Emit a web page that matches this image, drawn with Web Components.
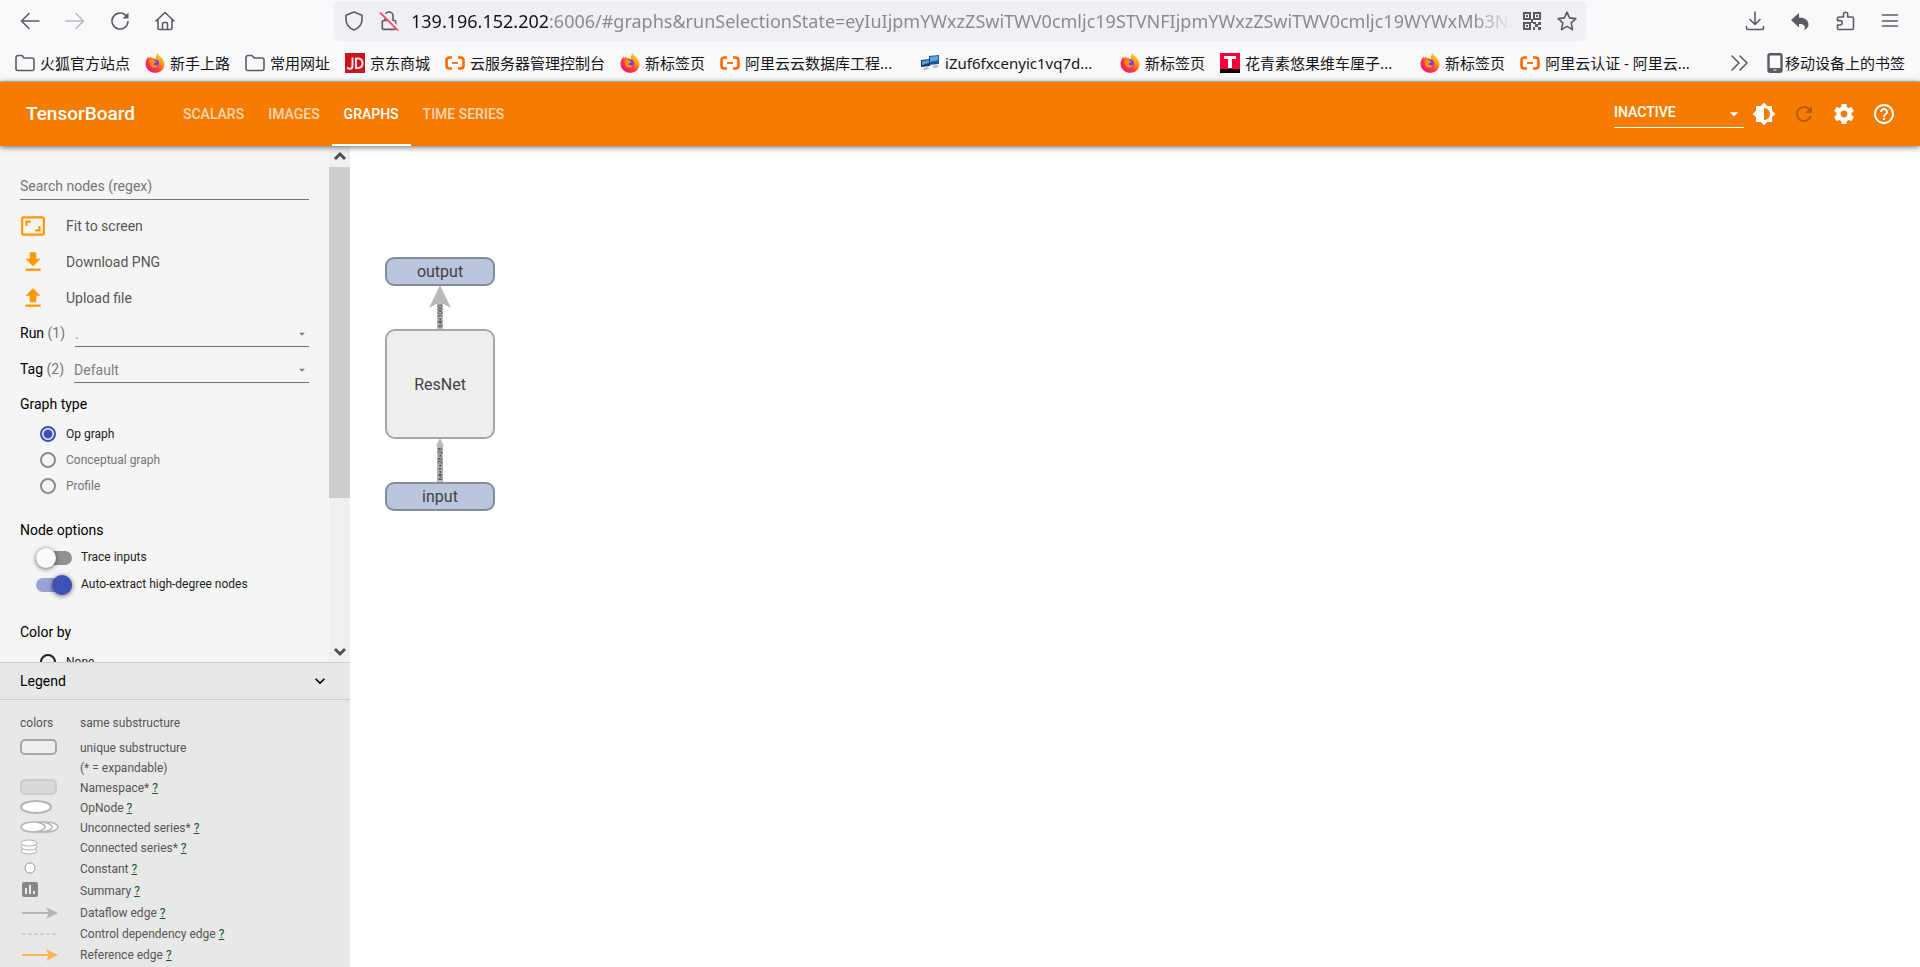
<!DOCTYPE html>
<html lang="zh-CN">
<head>
<meta charset="utf-8">
<title>TensorBoard</title>
<style>
  html, body { height: 100%; margin: 0; }
  body { font-family: Roboto, "Noto Sans CJK SC", sans-serif; font-size: 14px; color: #212121; }
</style>
</head>
<body>
<tb-window></tb-window>

<script>
const firefox = `<svg viewBox="0 0 20 20"><defs><linearGradient id="f" x1="1" y1="0" x2="0.2" y2="1"><stop offset="0" stop-color="#fff44f"/><stop offset="0.4" stop-color="#ff980e"/><stop offset="0.7" stop-color="#ff3647"/><stop offset="1" stop-color="#e31587"/></linearGradient></defs><path d="M12.5 0c.4 2 2.300 3 4 4.500 4 4.500 4 10-.3 13.500-3.400 2.500-9 2.500-12.500-.5C-.2 14.500-.3 9 2.300 5l1-1.500.8 1.700L6 3.500l.5 1.700c2-.3 3.500.3 4.500 1.300C10.600 4 11.200 1.500 12.500 0z" fill="url(#f)"/><circle cx="10" cy="10.500" r="4" fill="#7542e5"/><path d="M4.500 7.500c2-1.500 4-1 5.500.5l1.500.7c-.5 1.300-2.500 1-3 2.300 1 2 3.500 1.500 4.500.5-.5 3-3.500 4-5.800 2.700C5 13 4 10.500 4.500 7.500z" fill="#ff8a16"/></svg>`;
const folder = `<svg viewBox="0 0 20 20" fill="none" stroke="#5b5b66" stroke-width="1.600"><path d="M1 15.500v-11a2 2 0 0 1 2-2h4l2 2.500h8a2 2 0 0 1 2 2v8.500a2 2 0 0 1-2 2H3a2 2 0 0 1-2-2z"/></svg>`;
const aliyun = `<svg viewBox="0 0 20 20" fill="none" stroke="#ff6a00" stroke-width="2.600"><path d="M7 4.500H4.500C2.500 4.500 1.500 5.500 1.500 7.500v5c0 2 1 3 3 3H7M13 4.500h2.500c2 0 3 1 3 3v5c0 2-1 3-3 3H13"/><path d="M7 10h6" stroke-width="1.800"/></svg>`;
const icons = {
  firefox, folder, aliyun,
  jd: `<svg viewBox="0 0 20 20"><path fill="#c9151e" d="M0 0h20v20H0z"/><path d="M7.500 4.500v8.500c0 2-1 2.700-2.500 2.700-1 0-2-.3-3-.8M11 5.500v9.500h2c3 0 4.500-1.500 4.500-4.700S16 5.500 13 5.500z" fill="none" stroke="#fbdcdc" stroke-width="2"/></svg>`,
  tee: `<svg viewBox="0 0 20 20"><path fill="#ff0036" d="M0 0h20v16H0z"/><path d="M0 16h20v4H0z"/><path fill="#fff" d="M4 3h12v3h-4v9H8V6H4z"/></svg>`,
  pcs: `<svg viewBox="0 0 20 20"><path d="M9 3l10-1v9l-10 1z" fill="#1d5c9e"/><path d="M10 4l8-1v4l-8 2z" fill="#60a8d8"/><path d="M1 7l9-1v7l-9 1z" fill="#0f3d78"/><path d="M2 8l7-1v3l-7 2z" fill="#5b9fd2"/><path d="M3 15l5-1 1 2-5 1zM12 13l5-1 2 2-5 1z" fill="#bbb"/></svg>`,
  back: `<svg viewBox="0 0 20 20" class="line"><path d="M19 10H1.500M9 2.500 1.500 10 9 17.500"/></svg>`,
  forward: `<svg viewBox="0 0 20 20" class="line"><path d="M1 10h17.500M11 2.500l7.500 7.500-7.500 7.500"/></svg>`,
  reload: `<svg viewBox="0 0 20 20" class="line"><path d="M18 10.500a8 8 0 1 1-2.500-6.300"/><path d="M18.500 1.500v6h-6z" fill="#5b5b66" stroke="none"/></svg>`,
  home: `<svg viewBox="0 0 20 20" class="line"><path d="M1 10l9-8.500 9 8.500M3 8.500V17c0 1 .5 1.500 1.500 1.500h11c1 0 1.500-.5 1.500-1.500V8.500M7.500 18v-5c0-1 .5-1.500 1.500-1.500h2c1 0 1.500.5 1.500 1.500v5"/></svg>`,
  shield: `<svg viewBox="0 0 20 20" class="line"><path d="M10 1l8 3.200v4.300c0 4.500-3 8.500-8 10.500-5-2-8-6-8-10.500V4.200z"/></svg>`,
  unlock: `<svg viewBox="0 0 20 20" class="line"><path d="M6 8.500V5a4 4 0 0 1 8 0v3.500M4.500 9.500h11c.7 0 1.200.5 1.200 1.200v6.500c0 .7-.5 1.200-1.200 1.200h-11c-.7 0-1.200-.5-1.200-1.200v-6.500c0-.7.500-1.200 1.200-1.200z"/><path d="M3.500 2l15.500 15" stroke="#f0f0f4" stroke-width="3"/><path d="M1.500 2l17 17" stroke="#ff4f6a" stroke-width="1.800"/></svg>`,
  qr: `<svg viewBox="0 0 20 20" fill="#5b5b66"><path fill-rule="evenodd" d="M1 1h8v8H1zm2 2v4h4V3zM11 1h8v8h-8zm2 2v4h4V3zM1 11h8v8H1zm2 2v4h4v-4z"/><path d="M4 4h2v2H4zM14 4h2v2h-2zM4 14h2v2H4zM9 8h2v4H9zM11 11h3v2h-3zM16 11h3v3h-3zM13 13h3v3h-3zM11 16h2v3h-2zM16 16h3v3h-3z"/></svg>`,
  star: `<svg viewBox="0 0 20 20" class="line"><path d="M10 1.200l2.600 5.700 6.200.7-4.600 4.200 1.300 6.800L10 15.400l-5.500 3.200 1.300-6.800L1.200 7.600l6.200-.7z"/></svg>`,
  download: `<svg viewBox="0 0 20 20" class="line"><path d="M10 1v12M5 8.500l5 5 5-5M1.500 15.500V17c0 1 .5 1.500 1.500 1.500h14c1 0 1.500-.5 1.500-1.500v-1.500"/></svg>`,
  undo: `<svg viewBox="0 0 20 20" fill="#5b5b66"><path d="M9 2v4.500c6 0 9.500 3 9.500 7 0 2.500-1.500 4.500-4.500 5.500 2-3.500.5-6-5-6v3.500L1 9z"/></svg>`,
  puzzle: `<svg viewBox="0 0 20 20" class="line"><path d="M2.500 17.500V14H5a2.200 2.200 0 0 0 0-4.400H2.500V7.500c0-1 .5-1.500 1.500-1.500h4.500V3.300a2.100 2.100 0 0 1 4.200 0V6h4.300c1 0 1.500.5 1.500 1.500v9.500c0 1-.5 1.500-1.500 1.500H4c-1 0-1.500-.3-1.500-1z"/></svg>`,
  menu: `<svg viewBox="0 0 20 20" class="line"><path d="M2.500 4h15M2.500 10h15M2.500 15h15"/></svg>`,
  more: `<svg viewBox="0 0 20 20" class="line"><path d="M2 3l7 7-7 7M10 3l7 7-7 7"/></svg>`,
  phone: `<svg viewBox="0 0 20 20"><rect x="3.500" y="1.200" width="13" height="17.600" rx="1.500" fill="none" stroke="#5b5b66" stroke-width="2.400"/><path d="M4 15h12v4H4z" fill="#5b5b66"/><path d="M8.500 16.500h3v1h-3z" fill="#fff"/></svg>`,
  brightness: `<svg viewBox="0 0 24 24" fill="currentColor"><path d="M20 15.310L23.310 12 20 8.690V4h-4.690L12 .69 8.690 4H4v4.690L.69 12 4 15.310V20h4.690L12 23.310 15.310 20H20v-4.690zM12 18V6c3.310 0 6 2.690 6 6s-2.690 6-6 6z"/></svg>`,
  refresh: `<svg viewBox="0 0 24 24" fill="currentColor"><path d="M17.650 6.350C16.200 4.900 14.210 4 12 4c-4.420 0-7.990 3.580-7.990 8s3.570 8 7.990 8c3.730 0 6.840-2.550 7.730-6h-2.080c-.82 2.330-3.040 4-5.650 4-3.310 0-6-2.690-6-6s2.690-6 6-6c1.660 0 3.140.69 4.220 1.780L13 11h7V4l-2.350 2.350z"/></svg>`,
  settings: `<svg viewBox="0 0 24 24" fill="currentColor"><path d="M19.430 12.980c.04-.32.07-.64.07-.98s-.03-.66-.07-.98l2.110-1.650c.19-.15.24-.42.12-.64l-2-3.460c-.12-.22-.39-.3-.61-.22l-2.490 1c-.52-.4-1.080-.73-1.690-.98l-.38-2.650C14.460 2.180 14.250 2 14 2h-4c-.25 0-.46.18-.49.42l-.38 2.650c-.61.25-1.170.59-1.690.98l-2.490-1c-.23-.09-.49 0-.61.22l-2 3.460c-.13.22-.07.49.12.64l2.110 1.650c-.04.32-.07.65-.07.98s.03.66.07.98l-2.110 1.650c-.19.15-.24.42-.12.64l2 3.460c.12.22.39.3.61.22l2.490-1c.52.4 1.080.73 1.690.98l.38 2.650c.03.24.24.42.49.42h4c.25 0 .46-.18.49-.42l.38-2.650c.61-.25 1.170-.59 1.690-.98l2.490 1c.23.09.49 0 .61-.22l2-3.460c.12-.22.07-.49-.12-.64l-2.110-1.650zM12 15.500c-1.930 0-3.500-1.570-3.500-3.500s1.570-3.500 3.500-3.500 3.500 1.570 3.500 3.500-1.570 3.500-3.500 3.500z"/></svg>`,
  help: `<svg viewBox="0 0 24 24" fill="currentColor"><path d="M11 18h2v-2h-2v2zm1-16C6.480 2 2 6.480 2 12s4.480 10 10 10 10-4.480 10-10S17.520 2 12 2zm0 18c-4.410 0-8-3.590-8-8s3.590-8 8-8 8 3.590 8 8-3.590 8-8 8zm0-14c-2.210 0-4 1.790-4 4h2c0-1.100.9-2 2-2s2 .9 2 2c0 2-3 1.750-3 5h2c0-2.250 3-2.500 3-5 0-2.210-1.790-4-4-4z"/></svg>`,
  fit: `<svg viewBox="0 0 24 24" fill="currentColor"><path d="M19 12h-2v3h-3v2h5v-5zM7 9h3V7H5v5h2V9zm14-6H3c-1.100 0-2 .9-2 2v14c0 1.100.9 2 2 2h18c1.100 0 2-.9 2-2V5c0-1.100-.9-2-2-2zm0 16.010H3V4.990h18v14.020z"/></svg>`,
  save: `<svg viewBox="0 0 24 24" fill="currentColor"><path d="M19 9h-4V3H9v6H5l7 7 7-7zM5 18v2h14v-2H5z"/></svg>`,
  upload: `<svg viewBox="0 0 24 24" fill="currentColor"><path d="M9 16h6v-6h4l-7-7-7 7h4zm-4 2h14v2H5z"/></svg>`,
  caret: `<svg viewBox="0 0 24 24" fill="currentColor"><path d="M7 10l5 5 5-5z"/></svg>`,
  expand: `<svg viewBox="0 0 24 24" fill="currentColor"><path d="M16.590 8.590L12 13.170 7.410 8.590 6 10l6 6 6-6z"/></svg>`,
  scrollup: `<svg viewBox="0 0 20 20" fill="none" stroke="#505050" stroke-width="3"><path d="M5 12l5-5 5 5"/></svg>`,
  scrolldown: `<svg viewBox="0 0 20 20" fill="none" stroke="#505050" stroke-width="3"><path d="M5 7l5 5 5-5"/></svg>`
};

function define(name, render) {
  customElements.define(name, class extends HTMLElement {
    constructor() {
      super();
      this.attachShadow({ mode: "open" });
    }
    connectedCallback() {
      this.shadowRoot.innerHTML = render(this);
    }
  });
}

define("ui-icon", (el) => `
  <style>
    :host { display: block; flex: none; width: var(--size, 20px); height: var(--size, 20px); }
    svg { display: block; width: 100%; height: 100%; }
    .line { fill: none; stroke: #5b5b66; stroke-width: 1.6; stroke-linecap: round; stroke-linejoin: round; }
  </style>
  ${icons[el.getAttribute("name")]}
`);

define("browser-bookmark", (el) => `
  <style>
    :host { display: block; flex: none; }
    :host([long]) { width: 185px; }
    a { display: flex; align-items: center; gap: 5px; color: #15141a; text-decoration: none; line-height: 24px; white-space: nowrap; }
    :host([tight]) a { gap: 0; }
  </style>
  <a href="#"><ui-icon name="${el.getAttribute("icon")}"></ui-icon><span><slot></slot></span></a>
`);

define("browser-bar", () => `
  <style>
    :host { display: block; background: #f9f9fb; border-bottom: 1px solid #cccccf; font-family: "Noto Sans", "Noto Sans CJK SC", sans-serif; }
    .nav { display: flex; align-items: center; height: 40px; padding: 1px 20px 4px; }
    button { display: block; border: 0; padding: 0; background: none; }
    .tools { display: flex; gap: 25px; }
    .tools.left { width: 314px; }
    .off { opacity: 0.4; }
    .url { display: flex; align-items: center; gap: 15px; flex: 1; min-width: 0; height: 40px; box-sizing: border-box; padding: 0 9px 0 10px; background: #f0f0f4; border-radius: 5px; }
    .address { flex: 1; min-width: 0; overflow: hidden; white-space: nowrap; font-size: 18px; line-height: 32px; color: #8a8a90; margin: 0 -6px 0 -3px; mask-image: linear-gradient(to left, transparent, #000 40px); }
    .address b { font-weight: 400; color: #15141a; }
    .tools.right { padding-left: 159px; }
    .marks { display: flex; align-items: center; gap: 15px; height: 36px; padding: 0 15px; font-size: 15px; }
    .more { margin-left: auto; }
  </style>
  <div class="nav">
    <div class="tools left">
      <button aria-label="Back"><ui-icon name="back"></ui-icon></button>
      <button aria-label="Forward" class="off"><ui-icon name="forward"></ui-icon></button>
      <button aria-label="Reload"><ui-icon name="reload"></ui-icon></button>
      <button aria-label="Home"><ui-icon name="home"></ui-icon></button>
    </div>
    <div class="url">
      <ui-icon name="shield"></ui-icon>
      <ui-icon name="unlock"></ui-icon>
      <div class="address"><b>139.196.152.202</b>:6006/#graphs&amp;runSelectionState=eyIuIjpmYWxzZSwiTWV0cmljc19STVNFIjpmYWxzZSwiTWV0cmljc19WYWxMb3NzI</div>
      <ui-icon name="qr"></ui-icon>
      <ui-icon name="star"></ui-icon>
    </div>
    <div class="tools right">
      <button aria-label="Downloads"><ui-icon name="download"></ui-icon></button>
      <button aria-label="Undo"><ui-icon name="undo"></ui-icon></button>
      <button aria-label="Extensions"><ui-icon name="puzzle"></ui-icon></button>
      <button aria-label="Menu"><ui-icon name="menu"></ui-icon></button>
    </div>
  </div>
  <div class="marks">
    <browser-bookmark icon="folder">火狐官方站点</browser-bookmark>
    <browser-bookmark icon="firefox">新手上路</browser-bookmark>
    <browser-bookmark icon="folder">常用网址</browser-bookmark>
    <browser-bookmark icon="jd">京东商城</browser-bookmark>
    <browser-bookmark icon="aliyun">云服务器管理控制台</browser-bookmark>
    <browser-bookmark icon="firefox">新标签页</browser-bookmark>
    <browser-bookmark icon="aliyun" long>阿里云云数据库工程...</browser-bookmark>
    <browser-bookmark icon="pcs" long>iZuf6fxcenyic1vq7d...</browser-bookmark>
    <browser-bookmark icon="firefox">新标签页</browser-bookmark>
    <browser-bookmark icon="tee" long>花青素悠果维车厘子...</browser-bookmark>
    <browser-bookmark icon="firefox">新标签页</browser-bookmark>
    <browser-bookmark icon="aliyun" long>阿里云认证 - 阿里云...</browser-bookmark>
    <button class="more" aria-label="More bookmarks"><ui-icon name="more"></ui-icon></button>
    <browser-bookmark icon="phone" tight>移动设备上的书签</browser-bookmark>
  </div>
`);

define("tb-header", () => `
  <style>
    :host { display: flex; align-items: center; height: 64px; padding: 0 24px 0 26px; background: #f57c00; color: #fff; box-shadow: 0 1px 6px rgba(0, 0, 0, 0.6); position: relative; z-index: 1; font-weight: 500; }
    h1 { margin: 0 36px 0 0; font-size: 19px; line-height: 24px; font-weight: 500; }
    nav { display: flex; flex: 1; }
    nav a { padding: 0 12px; line-height: 64px; color: rgba(255, 255, 255, 0.7); text-decoration: none; }
    nav a.active { color: #fff; box-shadow: inset 0 -2px #fff; }
    .select { display: flex; align-items: center; width: 130px; height: 26px; border-bottom: 1px solid #fff; margin-right: 8px; }
    .select ui-icon { --size: 20px; margin-left: -20px; pointer-events: none; }
    select { appearance: none; flex: 1; width: 130px; border: 0; padding: 0 0 3px; background: none; color: #fff; font: 500 14px/22px Roboto, sans-serif; }
    .actions { display: flex; gap: 16px; --size: 24px; }
    button { border: 0; padding: 0; background: none; color: #fff; }
    button:disabled { color: rgba(0, 0, 0, 0.26); }
  </style>
  <h1>TensorBoard</h1>
  <nav>
    <a href="#scalars">SCALARS</a>
    <a href="#images">IMAGES</a>
    <a href="#graphs" class="active">GRAPHS</a>
    <a href="#timeseries">TIME SERIES</a>
  </nav>
  <div class="select">
    <select aria-label="Inactive dashboards"><option>INACTIVE</option></select>
    <ui-icon name="caret"></ui-icon>
  </div>
  <div class="actions">
    <button aria-label="Theme"><ui-icon name="brightness"></ui-icon></button>
    <button aria-label="Reload" disabled><ui-icon name="refresh"></ui-icon></button>
    <button aria-label="Settings"><ui-icon name="settings"></ui-icon></button>
    <button aria-label="Help"><ui-icon name="help"></ui-icon></button>
  </div>
`);

define("tb-action", (el) => `
  <style>
    :host { display: block; color: #ff9800; }
    button { display: flex; align-items: center; gap: 20px; height: 36px; border: 0; padding: 0; background: none; color: inherit; font: inherit; --size: 26px; }
    span { color: #555; }
  </style>
  <button><ui-icon name="${el.getAttribute("icon")}"></ui-icon><span><slot></slot></span></button>
`);

define("tb-dropdown", (el) => `
  <style>
    :host { display: flex; align-items: flex-end; height: 31px; margin-bottom: 5px; gap: 10px; }
    label { line-height: 28px; color: #000; }
    label span { color: #777; }
    .box { display: flex; align-items: center; flex: 1; border-bottom: 1px solid #737373; color: #808080; }
    select { appearance: none; flex: 1; border: 0; padding: 0; background: none; color: #808080; font: inherit; line-height: 24px; height: 24px; }
    ui-icon { --size: 14px; margin-left: -14px; pointer-events: none; }
  </style>
  <label for="pick">${el.getAttribute("label")} <span>(${el.getAttribute("count")})</span></label>
  <div class="box">
    <select id="pick"><option>${el.getAttribute("value")}</option></select>
    <ui-icon name="caret"></ui-icon>
  </div>
`);

define("tb-radio", (el) => `
  <style>
    :host { display: block; padding-left: 20px; font-size: 12px; line-height: 26px; color: #212121; }
    :host([disabled]) { color: #747474; }
    label { display: flex; align-items: center; gap: 10px; }
    input { appearance: none; flex: none; width: 16px; height: 16px; margin: 0; border: 2px solid #212121; border-radius: 50%; box-sizing: border-box; }
    input:checked { border-color: #3f51b5; background: radial-gradient(circle, #3f51b5 4px, transparent 5px); }
    input:disabled { border-color: #8c8c8c; }
  </style>
  <label><input type="radio" ${el.hasAttribute("checked") ? "checked" : ""} ${el.hasAttribute("disabled") ? "disabled" : ""}><slot></slot></label>
`);

define("tb-toggle", (el) => `
  <style>
    :host { display: block; padding-left: 16px; font-size: 12px; line-height: 27px; }
    label { display: flex; align-items: center; gap: 9px; }
    input { appearance: none; display: flex; align-items: center; width: 36px; height: 14px; margin: 0; border-radius: 7px; background: #919191; }
    input::before { content: ""; width: 20px; height: 20px; border-radius: 50%; background: #fafafa; box-shadow: 0 1px 5px rgba(0, 0, 0, 0.6); }
    input:checked { background: #9aa3d8; justify-content: flex-end; }
    input:checked::before { background: #3f51b5; }
  </style>
  <label><input type="checkbox" role="switch" ${el.hasAttribute("checked") ? "checked" : ""}><slot></slot></label>
`);

define("tb-scrollbar", () => `
  <style>
    :host { display: flex; flex-direction: column; width: 21px; background: #f0f0f0; }
    .thumb { flex: 331; background: #cdcdcd; }
    .rest { flex: 143; }
    .end { display: flex; align-items: center; justify-content: center; height: 21px; }
  </style>
  <div class="end"><ui-icon name="scrollup"></ui-icon></div>
  <div class="thumb"></div>
  <div class="rest"></div>
  <div class="end"><ui-icon name="scrolldown"></ui-icon></div>
`);

define("tb-controls", () => `
  <style>
    :host { display: flex; flex: 1; min-height: 0; background: #f5f5f5; }
    .pane { flex: 1; overflow: hidden; padding: 28px 20px 0; }
    input { display: block; width: 100%; height: 26px; box-sizing: border-box; border: 0; border-bottom: 1px solid #737373; padding: 0 0 1px; background: none; font: inherit; outline: 0; }
    input::placeholder { color: #757575; }
    .actions { padding-top: 8px; }
    h2 { margin: 0; font-size: 14px; line-height: 20px; font-weight: 400; color: #000; }
    .type { padding: 6px 0 21px; }
    .type h2 { padding-bottom: 7px; }
    .nodes { padding-bottom: 24px; }
    .nodes h2 { padding-bottom: 4px; }
    .color h2 { padding-bottom: 7px; }
  </style>
  <div class="pane">
    <input type="text" aria-label="Search nodes (regex)" placeholder="Search nodes (regex)">
    <div class="actions">
      <tb-action icon="fit">Fit to screen</tb-action>
      <tb-action icon="save">Download PNG</tb-action>
      <tb-action icon="upload">Upload file</tb-action>
    </div>
    <tb-dropdown label="Run" count="1" value="."></tb-dropdown>
    <tb-dropdown label="Tag" count="2" value="Default"></tb-dropdown>
    <section class="type">
      <h2>Graph type</h2>
      <tb-radio checked>Op graph</tb-radio>
      <tb-radio disabled>Conceptual graph</tb-radio>
      <tb-radio disabled>Profile</tb-radio>
    </section>
    <section class="nodes">
      <h2>Node options</h2>
      <tb-toggle>Trace inputs</tb-toggle>
      <tb-toggle checked>Auto-extract high-degree nodes</tb-toggle>
    </section>
    <section class="color">
      <h2>Color by</h2>
      <tb-radio>None</tb-radio>
    </section>
  </div>
  <tb-scrollbar></tb-scrollbar>
`);

define("legend-row", (el) => `
  <style>
    :host { display: flex; align-items: center; height: 20px; color: #555; }
    .key { width: 60px; }
    .key ::slotted(svg) { display: block; }
    a { color: #125a1f; }
  </style>
  <div class="key"><slot name="key"></slot></div>
  <div><slot></slot> ${el.hasAttribute("help") ? `<a href="#help">?</a>` : ""}</div>
`);

define("tb-legend", () => `
  <style>
    :host { display: block; background: #e8e8e8; }
    header { display: flex; align-items: center; justify-content: space-between; height: 36px; padding: 0 20px; border: solid #ccc; border-width: 1px 0; color: #000; }
    header ui-icon { --size: 20px; }
    header button { border: 0; padding: 0; background: none; color: #000; }
    .rows { padding: 10px 20px 2px; font-size: 12px; }
    .first { height: 26px; padding-bottom: 2px; }
    .tall { height: 21px; }
    .taller { height: 22px; }
  </style>
  <header>Legend <button aria-label="Collapse legend"><ui-icon name="expand"></ui-icon></button></header>
  <div class="rows">
    <legend-row class="first"><span slot="key">colors</span>same substructure</legend-row>
    <legend-row><svg slot="key" width="40" height="18"><rect x="1" y="1" width="35" height="14" rx="4" fill="#eee" stroke="#a6a6a6" stroke-width="2"/></svg>unique substructure</legend-row>
    <legend-row>(* = expandable)</legend-row>
    <legend-row help><svg slot="key" width="40" height="18"><rect x="1" y="1" width="35" height="14" rx="4" fill="#d9d9d9" stroke="#ccc" stroke-width="2"/></svg>Namespace*</legend-row>
    <legend-row help><svg slot="key" width="40" height="18"><ellipse cx="16" cy="8" rx="15" ry="6" fill="#fff" stroke="#b3b3b3" stroke-width="2"/></svg>OpNode</legend-row>
    <legend-row help><svg slot="key" width="40" height="18" fill="#fff" stroke="#b3b3b3" stroke-width="1.500"><ellipse cx="26" cy="8" rx="12" ry="5"/><ellipse cx="20" cy="8" rx="12" ry="5"/><ellipse cx="13" cy="8" rx="12" ry="5"/></svg>Unconnected series*</legend-row>
    <legend-row help><svg slot="key" width="40" height="18" fill="#fff" stroke="#b3b3b3"><ellipse cx="9" cy="12" rx="8" ry="3"/><ellipse cx="9" cy="8" rx="8" ry="3"/><ellipse cx="9" cy="4" rx="8" ry="3"/></svg>Connected series*</legend-row>
    <legend-row help class="taller"><svg slot="key" width="40" height="18"><circle cx="10" cy="8" r="5" fill="#fff" stroke="#999"/></svg>Constant</legend-row>
    <legend-row help class="taller"><svg slot="key" width="40" height="20"><rect x="2" y="1" width="16" height="15" rx="2" fill="#888"/><path d="M6 7v6M10 4v9M14 10v3" stroke="#e8e8e8" stroke-width="2"/></svg>Summary</legend-row>
    <legend-row help class="tall"><svg slot="key" width="40" height="16"><path d="M2 8h28" stroke="#b5b5b5" stroke-width="2"/><path d="M26 2l12 6-12 6 3-6z" fill="#b5b5b5"/></svg>Dataflow edge</legend-row>
    <legend-row help class="tall"><svg slot="key" width="40" height="16"><path d="M2 8h36" stroke="#b5b5b5" stroke-dasharray="4 2"/></svg>Control dependency edge</legend-row>
    <legend-row help class="tall"><svg slot="key" width="40" height="16"><path d="M2 8h28" stroke="#ffb74d" stroke-width="2"/><path d="M26 2l12 6-12 6 3-6z" fill="#ffb74d"/></svg>Reference edge</legend-row>
  </div>
`);

define("tb-graph", () => `
  <style>
    :host { display: block; flex: 1; min-width: 0; background: #fff; }
    svg { display: block; width: 100%; height: 100%; }
    .name { font-size: 16px; fill: #424242; text-anchor: middle; }
    .op { fill: #bbc5de; stroke: #828ba0; stroke-width: 2; }
    .shape { font-size: 6px; fill: #222; text-anchor: middle; }
  </style>
  <svg>
    <path d="M90 183V156M90 336V300" stroke="#b8b8b8" stroke-width="6"/>
    <path d="M90 139l11 23-11-6-11 6zM90 292l4 8h-8z" fill="#b8b8b8"/>
    <text class="shape" transform="translate(92 170) rotate(-90)">64×1000</text>
    <text class="shape" transform="translate(92 318) rotate(-90)">64×1×28×28</text>
    <rect class="op" x="36" y="112" width="108" height="27" rx="8"/>
    <rect x="36" y="184" width="108" height="108" rx="9" fill="#eee" stroke="#a6a6a6" stroke-width="2"/>
    <rect class="op" x="36" y="337" width="108" height="27" rx="8"/>
    <text class="name" x="90" y="131">output</text>
    <text class="name" x="90" y="244">ResNet</text>
    <text class="name" x="90" y="356">input</text>
  </svg>
`);

define("tb-window", () => `
  <style>
    :host { display: flex; flex-direction: column; height: 100vh; }
    main { display: flex; flex: 1; min-height: 0; }
    aside { display: flex; flex-direction: column; width: 350px; }
  </style>
  <browser-bar></browser-bar>
  <tb-header></tb-header>
  <main>
    <aside>
      <tb-controls></tb-controls>
      <tb-legend></tb-legend>
    </aside>
    <tb-graph></tb-graph>
  </main>
`);
</script>
</body>
</html>
